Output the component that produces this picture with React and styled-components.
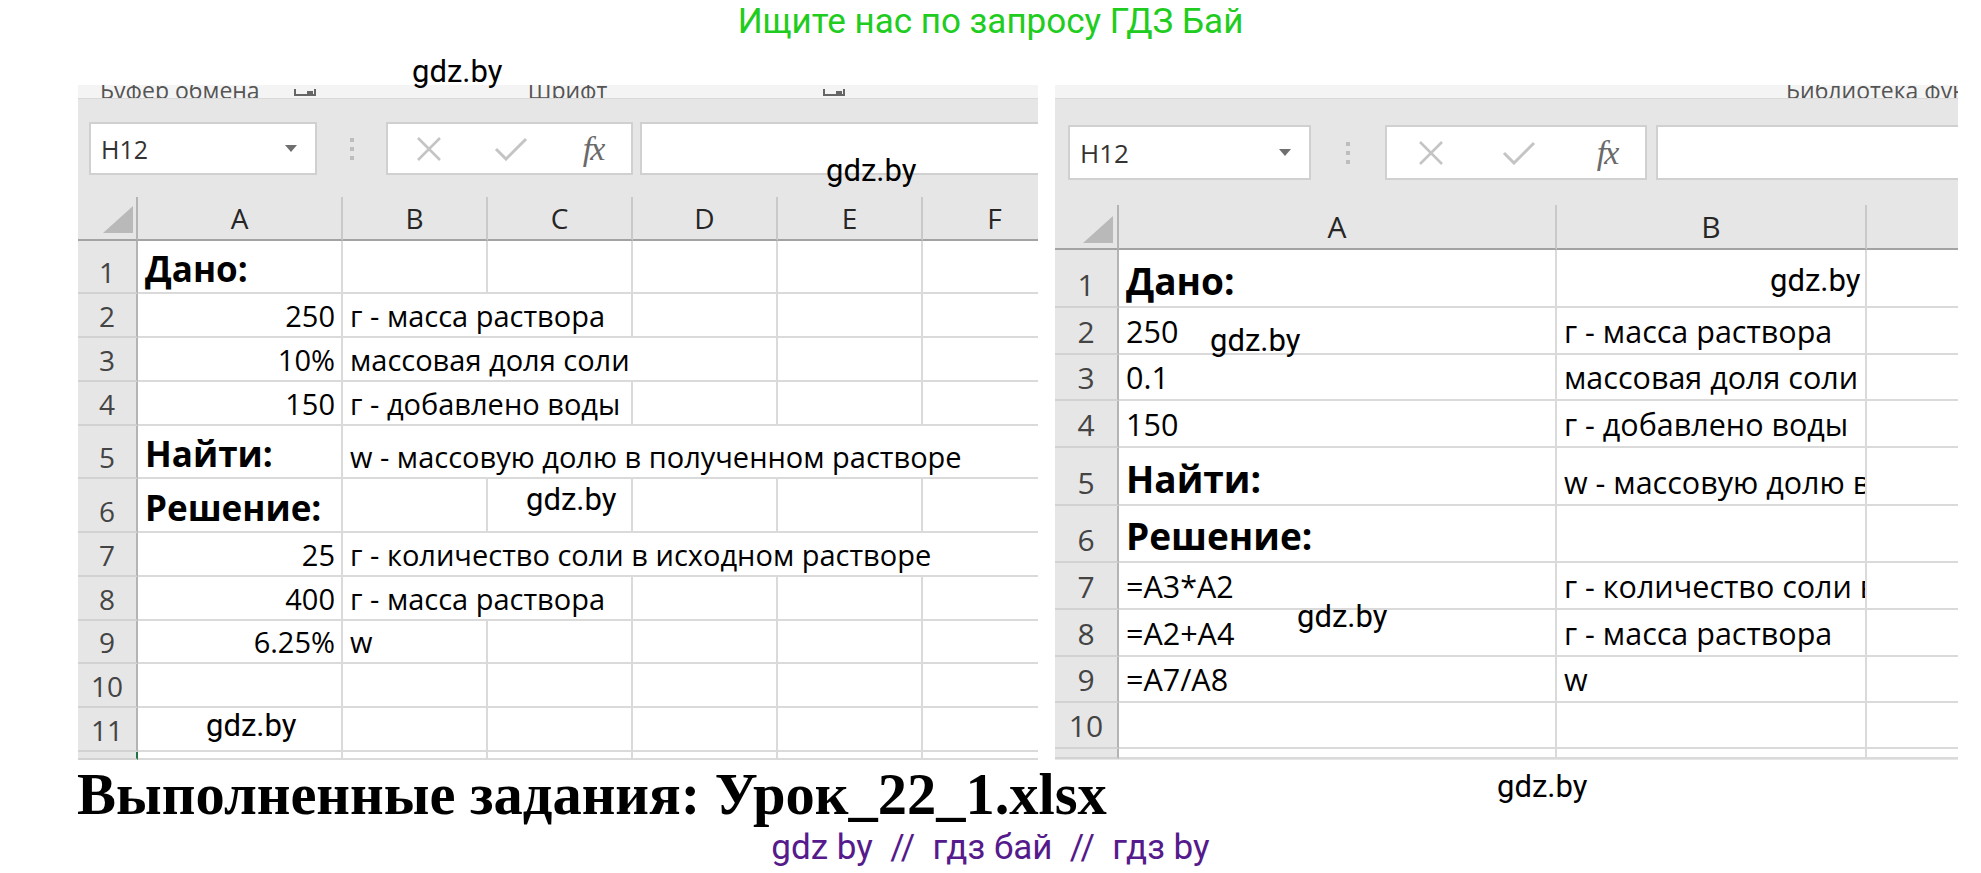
import React from "react";
import styled, { createGlobalStyle } from "styled-components";

const GlobalStyle = createGlobalStyle`
  html, body {
    margin: 0;
    padding: 0;
    background: #fff;
  }
  body {
    font-family: "Open Sans", "Noto Sans", sans-serif;
  }
`;

const Page = styled.div`
  position: relative;
  width: 1981px;
  height: 873px;
  overflow: hidden;
  background: #fff;
`;

const Banner = styled.div`
  height: 85px;
  box-sizing: border-box;
  padding-top: 3px;
  text-align: center;
  font-family: Roboto, "Noto Sans", sans-serif;
  font-size: 35px;
  line-height: 38px;
  color: #20cc20;
`;

const Sheets = styled.div`
  display: flex;
  gap: 17px;
  padding-left: 78px;
  height: 675px;
`;

const Panel = styled.div`
  flex: none;
  width: ${(p) => p.$w}px;
  height: 675px;
  overflow: hidden;
  background: #e6e6e6;
  display: flex;
  flex-direction: column;
`;

const Ribbon = styled.div`
  flex: none;
  height: 13px;
  background: #f4f4f4;
  border-bottom: 1px solid #d9d9d9;
  overflow: hidden;
  display: flex;
  align-items: flex-end;
  white-space: nowrap;
`;

const RibbonLabel = styled.span`
  margin-left: ${(p) => p.$ml}px;
  margin-bottom: -4px;
  font-size: 23px;
  line-height: 24px;
  color: #555;
`;

const LauncherMark = styled.svg`
  flex: none;
  margin-left: ${(p) => p.$ml}px;
  margin-bottom: 1px;
`;

const Launcher = ({ ml }) => (
  <LauncherMark $ml={ml} width="30" height="8" viewBox="0 0 30 8">
    <path d="M2 0 V6 H22 V0" fill="none" stroke="#666" strokeWidth="2" />
    <rect x="14" y="2" width="6" height="3" fill="#666" />
  </LauncherMark>
);

const BarRow = styled.div`
  flex: none;
  display: flex;
  height: ${(p) => p.$h}px;
  margin: ${(p) => p.$mt}px 0 ${(p) => p.$mb}px ${(p) => p.$ml}px;
`;

const NameBox = styled.div`
  flex: none;
  width: ${(p) => p.$w}px;
  box-sizing: border-box;
  background: #fff;
  border: 2px solid #d0d0d0;
  display: flex;
  align-items: center;
  justify-content: space-between;
  padding: 0 18px 0 10px;
  font-size: ${(p) => p.$fs}px;
  color: #333;
`;

const Grip = styled.div`
  flex: none;
  width: ${(p) => p.$w}px;
  display: flex;
  align-items: center;
  justify-content: center;
`;

const FuncBox = styled.div`
  flex: none;
  width: ${(p) => p.$w}px;
  box-sizing: border-box;
  background: #fff;
  border: 2px solid #d0d0d0;
  display: grid;
  grid-template-columns: repeat(3, ${(p) => p.$cell}px);
  align-items: center;
  justify-items: center;
`;

const Fx = styled.span`
  font-family: "Liberation Serif", "DejaVu Serif", serif;
  font-style: italic;
  font-size: 34px;
  line-height: 1;
  letter-spacing: -2px;
  color: #6a6a6a;
`;

const InputBox = styled.div`
  flex: 1;
  margin-left: ${(p) => p.$ml}px;
  background: #fff;
  border: 2px solid #d0d0d0;
  border-right: none;
`;

const Table = styled.div`
  flex: none;
  display: grid;
  grid-template-columns: ${(p) => p.$cols};
  grid-template-rows: ${(p) => p.$rows};
  background: #fff;
`;

const Corner = styled.div`
  background: #e6e6e6;
  border-right: 2px solid #b4b4b4;
  border-bottom: 2px solid #a3a3a3;
  display: flex;
  align-items: flex-end;
  justify-content: flex-end;
  padding: 0 ${(p) => p.$pr}px ${(p) => p.$pb}px 0;
`;

const ColHead = styled.div`
  background: #e6e6e6;
  border-right: 2px solid #c9c9c9;
  border-bottom: 2px solid #a3a3a3;
  display: flex;
  align-items: center;
  justify-content: center;
  font-size: ${(p) => p.$fs}px;
  color: #262626;
`;

const RowHead = styled.div`
  background: #e6e6e6;
  border-right: 2px solid ${(p) => (p.$accent ? "#217346" : "#b4b4b4")};
  border-bottom: 2px solid #d2d2d2;
  display: flex;
  align-items: flex-end;
  justify-content: center;
  padding-bottom: ${(p) => p.$pb}px;
  font-size: ${(p) => p.$fs}px;
  line-height: 1.2;
  color: #444;
  overflow: hidden;
`;

const Cell = styled.div`
  grid-column: span ${(p) => p.$span};
  min-width: 0;
  border-right: 2px solid #dadada;
  border-bottom: 2px solid #dadada;
  display: flex;
  align-items: flex-end;
  justify-content: ${(p) => (p.$right ? "flex-end" : "flex-start")};
  padding: 0 6px ${(p) => p.$pb}px 7px;
  white-space: nowrap;
  overflow: ${(p) => (p.$clip ? "hidden" : "visible")};
  font-size: ${(p) => (p.$bold ? p.$bfs : p.$fs)}px;
  font-weight: ${(p) => (p.$bold ? 700 : 400)};
  line-height: 1.2;
  color: #000;
`;

const Watermark = styled.div`
  position: absolute;
  left: ${(p) => p.$x}px;
  top: ${(p) => p.$y}px;
  font-family: Roboto, "Noto Sans", sans-serif;
  font-size: 31px;
  line-height: 1;
  color: #000;
`;

const Title = styled.h1`
  margin: 6px 0 0 77px;
  font-family: "Liberation Serif", "Times New Roman", serif;
  font-weight: 700;
  font-size: 58.5px;
  line-height: 58px;
  color: #000;
  white-space: nowrap;
`;

const Links = styled.div`
  margin-top: 6px;
  text-align: center;
  white-space: pre;
  font-family: Roboto, "Noto Sans", sans-serif;
  font-size: 35px;
  line-height: 35px;
  color: #551a8b;
`;

const leftSheet = {
  width: 960,
  cols: [60, 205, 145, 145, 145, 145, 145],
  letters: ["A", "B", "C", "D", "E", "F"],
  headH: 44,
  rows: [53, 44, 44, 44, 53, 54, 44, 44, 43, 44, 44, 8],
  fs: 29,
  bfs: 35,
  numFs: 28,
  pb: 2,
  clip: false,
  accentLast: true,
  corner: { pr: 3, pb: 6 },
  ribbon: [
    { t: "Буфер обмена", ml: 22 },
    { launcher: true, ml: 33 },
    { t: "Шрифт", ml: 205 },
    { launcher: true, ml: 215 },
  ],
  bar: { mt: 23, h: 53, mb: 22, ml: 11, name: 228, gap: 69, func: 247, cell: 82, inputGap: 7, fs: 25 },
  cells: [
    [{ t: "Дано:", b: true }],
    [{ t: "250", r: true }, { t: "г - масса раствора", s: 2 }],
    [{ t: "10%", r: true }, { t: "массовая доля соли", s: 3 }],
    [{ t: "150", r: true }, { t: "г - добавлено воды", s: 2 }],
    [{ t: "Найти:", b: true }, { t: "w - массовую долю в полученном растворе", s: 5 }],
    [{ t: "Решение:", b: true }],
    [{ t: "25", r: true }, { t: "г - количество соли в исходном растворе", s: 5 }],
    [{ t: "400", r: true }, { t: "г - масса раствора", s: 2 }],
    [{ t: "6.25%", r: true }, { t: "w" }],
  ],
};

const rightSheet = {
  width: 903,
  cols: [64, 438, 310, 310],
  letters: ["A", "B", "C"],
  headH: 45,
  rows: [58, 47, 46, 47, 58, 57, 47, 47, 46, 46, 10],
  fs: 30.5,
  bfs: 37,
  numFs: 30,
  pb: 3,
  clip: true,
  accentLast: false,
  corner: { pr: 4, pb: 5 },
  ribbon: [{ t: "Библиотека функций", ml: 731 }],
  bar: { mt: 26, h: 55, mb: 25, ml: 13, name: 243, gap: 74, func: 262, cell: 88, inputGap: 9, fs: 26 },
  cells: [
    [{ t: "Дано:", b: true }],
    [{ t: "250" }, { t: "г - масса раствора" }],
    [{ t: "0.1" }, { t: "массовая доля соли" }],
    [{ t: "150" }, { t: "г - добавлено воды" }],
    [{ t: "Найти:", b: true }, { t: "w - массовую долю в полученном растворе" }],
    [{ t: "Решение:", b: true }],
    [{ t: "=A3*A2" }, { t: "г - количество соли в исходном растворе" }],
    [{ t: "=A2+A4" }, { t: "г - масса раствора" }],
    [{ t: "=A7/A8" }, { t: "w" }],
  ],
};

const marks = [
  [412, 56],
  [826, 155],
  [526, 484],
  [206, 710],
  [1210, 325],
  [1770, 265],
  [1297, 601],
  [1497, 771],
];

const fillRow = (list, n) => {
  const out = [...list];
  let used = list.reduce((a, c) => a + (c.s || 1), 0);
  while (used < n) {
    out.push({});
    used += 1;
  }
  return out;
};

const FormulaBar = ({ bar }) => (
  <BarRow $mt={bar.mt} $h={bar.h} $mb={bar.mb} $ml={bar.ml}>
    <NameBox $w={bar.name} $fs={bar.fs}>
      H12
      <svg width="12" height="7" viewBox="0 0 12 7">
        <path d="M0 0 H12 L6 7 Z" fill="#6f6f6f" />
      </svg>
    </NameBox>
    <Grip $w={bar.gap}>
      <svg width="6" height="22" viewBox="0 0 6 22">
        <rect x="1" y="0" width="4" height="4" fill="#bdbdbd" />
        <rect x="1" y="9" width="4" height="4" fill="#bdbdbd" />
        <rect x="1" y="18" width="4" height="4" fill="#bdbdbd" />
      </svg>
    </Grip>
    <FuncBox $w={bar.func} $cell={bar.cell}>
      <svg width="28" height="26" viewBox="0 0 28 26">
        <path d="M3 2 L25 24 M25 2 L3 24" stroke="#c4c4c4" strokeWidth="2.5" />
      </svg>
      <svg width="34" height="24" viewBox="0 0 34 24">
        <path d="M2 12 L12 22 L32 2" fill="none" stroke="#c4c4c4" strokeWidth="3" />
      </svg>
      <Fx>fx</Fx>
    </FuncBox>
    <InputBox $ml={bar.inputGap} />
  </BarRow>
);

const Sheet = ({ spec }) => {
  const n = spec.letters.length;
  const last = spec.rows.length - 1;
  return (
    <Panel $w={spec.width}>
      <Ribbon>
        {spec.ribbon.map((item, i) =>
          item.launcher ? (
            <Launcher key={i} ml={item.ml} />
          ) : (
            <RibbonLabel key={i} $ml={item.ml}>
              {item.t}
            </RibbonLabel>
          )
        )}
      </Ribbon>
      <FormulaBar bar={spec.bar} />
      <Table
        $cols={spec.cols.map((c) => `${c}px`).join(" ")}
        $rows={[spec.headH, ...spec.rows].map((h) => `${h}px`).join(" ")}
      >
        <Corner $pr={spec.corner.pr} $pb={spec.corner.pb}>
          <svg width="30" height="27" viewBox="0 0 30 27">
            <path d="M30 0 V27 H0 Z" fill="#b9b9b9" />
          </svg>
        </Corner>
        {spec.letters.map((l) => (
          <ColHead key={l} $fs={spec.numFs}>
            {l}
          </ColHead>
        ))}
        {spec.rows.map((h, r) => (
          <React.Fragment key={r}>
            <RowHead $fs={spec.numFs} $pb={r === last ? 0 : spec.pb} $accent={spec.accentLast && r === last}>
              {r === last ? "" : r + 1}
            </RowHead>
            {fillRow(spec.cells[r] || [], n).map((c, i) => (
              <Cell
                key={i}
                $span={c.s || 1}
                $right={c.r}
                $bold={c.b}
                $fs={spec.fs}
                $bfs={spec.bfs}
                $pb={r === last ? 0 : spec.pb}
                $clip={spec.clip}
              >
                {c.t}
              </Cell>
            ))}
          </React.Fragment>
        ))}
      </Table>
    </Panel>
  );
};

const App = () => (
  <Page>
    <GlobalStyle />
    <Banner>Ищите нас по запросу ГДЗ Бай</Banner>
    <Sheets>
      <Sheet spec={leftSheet} />
      <Sheet spec={rightSheet} />
    </Sheets>
    <Title>Выполненные задания: Урок_22_1.xlsx</Title>
    <Links>{"gdz by  //  гдз бай  //  гдз by"}</Links>
    {marks.map(([x, y], i) => (
      <Watermark key={i} $x={x} $y={y}>
        gdz.by
      </Watermark>
    ))}
  </Page>
);

export default App;
